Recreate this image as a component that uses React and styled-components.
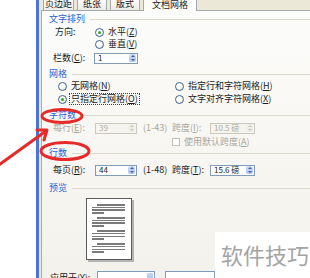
import React from 'react'
import styled, { createGlobalStyle } from 'styled-components'

const GlobalStyle = createGlobalStyle`
  html, body { margin: 0; padding: 0; background: #fff; }
  body { font-family: "Noto Sans CJK SC", "Liberation Sans", sans-serif; }
`

const Screen = styled.div`
  position: relative;
  width: 310px;
  height: 278px;
  overflow: hidden;
  display: flex;
  background: #fff;
  font-size: 9px;
  line-height: 10px;
  color: #1b1b1b;
`

const Gutter = styled.div`
  width: 36px;
  flex: none;
  background: #fff;
`

const Frame = styled.div`
  flex: 1;
  min-width: 0;
  display: flex;
  flex-direction: column;
  border-left: 3px solid #4a74d8;
  padding-left: 2px;
  background: #ebe8d7;
`

const TabStrip = styled.div`
  height: 10px;
  flex: none;
  display: flex;
  align-items: flex-end;
  gap: 3px;
  padding-left: 2px;
`

const Tab = styled.div`
  width: ${p => p.$w}px;
  height: ${p => (p.$active ? 16 : 14)}px;
  flex: none;
  box-sizing: border-box;
  display: flex;
  align-items: flex-end;
  justify-content: center;
  padding-bottom: 1px;
  border: 1px solid #a3aab0;
  border-bottom: none;
  border-radius: 3px 3px 0 0;
  background: ${p => (p.$active ? '#fcfcfb' : 'linear-gradient(#ffffff, #ecebe4)')};
  margin-bottom: ${p => (p.$active ? -1 : 0)}px;
  position: relative;
  z-index: ${p => (p.$active ? 1 : 0)};
`

const Panel = styled.div`
  flex: 1;
  display: flex;
  flex-direction: column;
  border-top: 1px solid #a3aab0;
  border-left: 1px solid #a3aab0;
  background: linear-gradient(180deg, #fcfcfb 0%, #f8f7f3 45%, #f2f1ec 100%);
`

const Heading = styled.div`
  height: 12px;
  margin-top: ${p => p.$mt}px;
  padding-left: 7px;
  display: flex;
  align-items: center;
  color: #2c5fd9;
  &::after {
    content: '';
    flex: 1;
    height: 1px;
    margin-left: 5px;
    background: #dcd9cd;
  }
`

const Row = styled.div`
  height: ${p => p.$h || 12}px;
  margin-top: ${p => p.$mt || 0}px;
  padding-left: ${p => p.$pl}px;
  display: flex;
  align-items: center;
  color: ${p => (p.$disabled ? '#a8a69c' : '#1b1b1b')};
`

const Label = styled.span`
  width: ${p => p.$w}px;
  flex: none;
  white-space: nowrap;
`

const U = styled.span`
  text-decoration: underline;
`

const Option = styled.span`
  width: ${p => (p.$w ? `${p.$w}px` : 'auto')};
  flex: none;
  display: flex;
  align-items: center;
  gap: 3px;
  white-space: nowrap;
`

const OptionText = styled.span`
  padding: 0 1px;
  outline: ${p => (p.$focus ? '1px dotted #444' : 'none')};
`

const RadioDot = styled.span`
  width: 9px;
  height: 9px;
  box-sizing: border-box;
  border-radius: 50%;
  border: 1px solid #3f6591;
  background: radial-gradient(circle at 35% 35%, #ffffff 30%, #dedcd2 100%);
  display: flex;
  align-items: center;
  justify-content: center;
  &::after {
    content: '';
    display: ${p => (p.$on ? 'block' : 'none')};
    width: 3px;
    height: 3px;
    border-radius: 50%;
    background: #30a830;
  }
`

const CheckBox = styled.span`
  width: 8px;
  height: 8px;
  flex: none;
  box-sizing: border-box;
  border: 1px solid #c4c2b6;
  background: #fff;
  margin-right: 4px;
`

const SpinBox = styled.div`
  width: ${p => p.$w}px;
  height: 11px;
  flex: none;
  box-sizing: border-box;
  border: 1px solid ${p => (p.$disabled ? '#cbc9bd' : '#7f9db9')};
  background: ${p => (p.$disabled ? '#f5f4ee' : '#fff')};
  color: ${p => (p.$disabled ? '#b0ae a4' : '#1b1b1b')};
  display: flex;
  align-items: center;
  padding: 0 1px 0 3px;
  font-size: 8px;
`

const SpinValue = styled.span`
  flex: 1;
  color: ${p => (p.$disabled ? '#aeaca2' : '#1b1b1b')};
`

const SpinButtons = styled.div`
  width: 7px;
  height: 8px;
  flex: none;
  display: flex;
  flex-direction: column;
  align-items: center;
  justify-content: space-around;
  border-radius: 2px;
  background: ${p => (p.$disabled ? '#efeee7' : 'linear-gradient(#d2defb, #a9c1f2)')};
`

const Arrow = styled.span`
  width: 0;
  height: 0;
  border-left: 2px solid transparent;
  border-right: 2px solid transparent;
  ${p => (p.$down ? 'border-top' : 'border-bottom')}: 2px solid ${p => (p.$disabled ? '#c9c7bd' : '#3c5fa8')};
`

const Range = styled.span`
  width: 29px;
  margin-left: 6px;
  flex: none;
  color: ${p => (p.$disabled ? '#a8a69c' : '#1b1b1b')};
`

const PreviewArea = styled.div`
  margin-top: 4px;
  padding-left: 44px;
`

const Page = styled.div`
  width: 46px;
  height: 62px;
  box-sizing: border-box;
  border: 1px solid #5a5a5a;
  background: #fff;
  box-shadow: 2px 2px 0 #b3b3b3;
  padding: 5px 6px 0 5px;
  display: flex;
  flex-direction: column;
  gap: 3.5px;
`

const Para = styled.div`
  display: flex;
  flex-direction: column;
  gap: 1.2px;
`

const Line = styled.div`
  height: 1.5px;
  background: #7a7a7a;
  margin-left: ${p => p.$indent || 0}px;
  width: ${p => (p.$short ? '12px' : 'auto')};
`

const Combo = styled.div`
  width: ${p => p.$w}px;
  height: 14px;
  flex: none;
  box-sizing: border-box;
  border: 1px solid #7f9db9;
  background: #fff;
  display: flex;
  justify-content: flex-end;
  padding: 1px;
  margin-left: ${p => p.$ml || 0}px;
`

const ComboButton = styled.div`
  width: 6px;
  background: linear-gradient(#c6d5f8, #9db7ee);
  border-radius: 1px;
`

const Overlay = styled.svg`
  position: absolute;
  left: 0;
  top: 0;
  pointer-events: none;
`

const Watermark = styled.div`
  position: absolute;
  left: 215px;
  top: 232px;
  right: 0;
  bottom: 0;
  background: rgba(255, 255, 255, 0.96);
  display: flex;
  align-items: center;
  padding-left: 6px;
  font-size: 22px;
  line-height: 22px;
  color: #a4a4a4;
  padding-bottom: 2px;
`

const Radio = ({ on, w, focus, children }) => (
  <Option $w={w}>
    <RadioDot $on={on} />
    <OptionText $focus={focus}>{children}</OptionText>
  </Option>
)

const Spin = ({ w, value, disabled }) => (
  <SpinBox $w={w} $disabled={disabled}>
    <SpinValue $disabled={disabled}>{value}</SpinValue>
    <SpinButtons $disabled={disabled}>
      <Arrow $disabled={disabled} />
      <Arrow $down $disabled={disabled} />
    </SpinButtons>
  </SpinBox>
)

const paragraphs = [0, 1, 2, 3]

export default function App() {
  return (
    <>
      <GlobalStyle />
      <Screen>
        <Gutter />
        <Frame>
          <TabStrip>
            <Tab $w={31}>页边距</Tab>
            <Tab $w={30}>纸张</Tab>
            <Tab $w={30}>版式</Tab>
            <Tab $w={54} $active>文档网格</Tab>
          </TabStrip>
          <Panel>
            <Heading $mt={2}>文字排列</Heading>
            <Row $mt={1} $pl={13}>
              <Label $w={40}>方向:</Label>
              <Radio on>水平(<U>Z</U>)</Radio>
            </Row>
            <Row $pl={53}>
              <Radio>垂直(<U>V</U>)</Radio>
            </Row>
            <Row $mt={2} $pl={11}>
              <Label $w={41}>栏数(<U>C</U>):</Label>
              <Spin w={44} value="1" />
            </Row>

            <Heading $mt={4}>网格</Heading>
            <Row $pl={16}>
              <Radio w={117}>无网格(<U>N</U>)</Radio>
              <Radio>指定行和字符网格(<U>H</U>)</Radio>
            </Row>
            <Row $mt={1} $pl={16}>
              <Radio w={117} on focus>只指定行网格(<U>O</U>)</Radio>
              <Radio>文字对齐字符网格(<U>X</U>)</Radio>
            </Row>

            <Heading $mt={4}>字符数</Heading>
            <Row $mt={1} $pl={11} $disabled>
              <Label $w={42}>每行(<U>E</U>):</Label>
              <Spin w={42} value="39" disabled />
              <Range $disabled>(1-43)</Range>
              <Label $w={38}>跨度(<U>I</U>):</Label>
              <Spin w={45} value="10.5 磅" disabled />
            </Row>
            <Row $mt={3} $h={10} $pl={130} $disabled>
              <CheckBox />
              <span>使用默认跨度(<U>A</U>)</span>
            </Row>

            <Heading $mt={0}>行数</Heading>
            <Row $mt={5} $pl={11}>
              <Label $w={42}>每页(<U>R</U>):</Label>
              <Spin w={42} value="44" />
              <Range>(1-48)</Range>
              <Label $w={38}>跨度(<U>T</U>):</Label>
              <Spin w={45} value="15.6 磅" />
            </Row>

            <Heading $mt={6}>预览</Heading>
            <PreviewArea>
              <Page>
                {paragraphs.map(i => (
                  <Para key={i}>
                    <Line $indent={5} />
                    <Line />
                    <Line />
                    <Line $short />
                  </Para>
                ))}
              </Page>
            </PreviewArea>

            <Row $mt={11} $h={14} $pl={8}>
              <Label $w={47}>应用于(<U>Y</U>):</Label>
              <Combo $w={58}>
                <ComboButton />
              </Combo>
              <Combo $w={50} $ml={10} />
            </Row>
          </Panel>
        </Frame>

        <Overlay width="310" height="278" viewBox="0 0 310 278">
          <g fill="none" stroke="#e62a2a" strokeWidth="3" strokeLinecap="round">
            <ellipse cx="62" cy="116" rx="20" ry="6.5" />
            <ellipse cx="65" cy="151" rx="24" ry="8.5" />
            <path d="M-4 167 L46 131" />
            <path d="M37 130 L47 130 L44 140" strokeLinejoin="round" />
          </g>
        </Overlay>

        <Watermark>软件技巧</Watermark>
      </Screen>
    </>
  )
}
